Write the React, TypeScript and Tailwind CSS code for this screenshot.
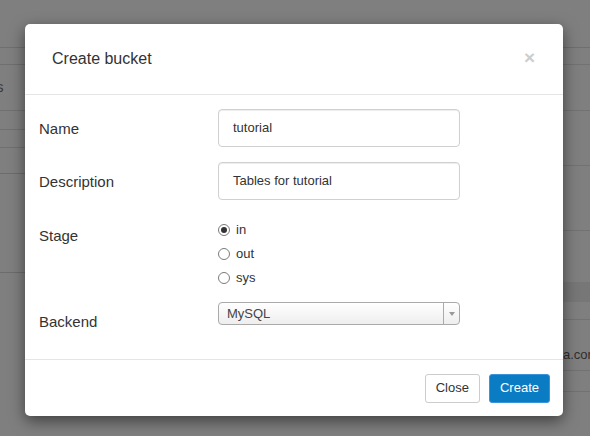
import React from 'react';

const font = { fontFamily: '"Liberation Sans", Arial, Helvetica, sans-serif' };

const Radio = ({ label, checked }: { label: string; checked?: boolean }) => (
  <div className="flex items-center h-[24px]">
    <span className="w-[12px] h-[12px] rounded-full border border-[#7b7b7b] bg-white flex items-center justify-center">
      {checked && <span className="w-[6px] h-[6px] rounded-full bg-[#333]" />}
    </span>
    <span className="ml-[6px] text-[13px] text-[#333]">{label}</span>
  </div>
);

const TextInput = ({ value }: { value: string }) => (
  <div className="w-[242px] h-[38px] border border-[#d0d0d0] rounded-[4px] bg-white shadow-[inset_0_1px_1px_rgba(0,0,0,0.075)] flex items-center px-[14px] text-[13px] text-[#333]">
    {value}
  </div>
);

export default function App() {
  return (
    <div className="relative w-[590px] h-[436px] overflow-hidden bg-[#7f7f7f]" style={font}>
      {/* Page behind the dimmed backdrop */}
      <div className="flex h-full">
        <div className="w-[25px] flex flex-col">
          <div className="h-[48px] border-b border-[#6f6f6f]" />
          <div className="h-[17px] border-b border-[#6f6f6f]" />
          <div className="h-[46px] border-b border-[#707070] flex items-center text-[15px] text-[#3a3a3a] -ml-[4px]">s</div>
          <div className="h-[19px] border-b border-[#707070]" />
          <div className="h-[18px] border-b border-[#707070]" />
          <div className="h-[26px] border-b border-[#6c6c6c]" />
          <div className="h-[99px] border-b border-[#6c6c6c]" />
        </div>
        <div className="flex-1" />
        <div className="w-[27px] flex flex-col">
          <div className="h-[48px] border-b border-[#6f6f6f]" />
          <div className="h-[17px] border-b border-[#727272]" />
          <div className="h-[46px] border-b border-[#727272]" />
          <div className="h-[55px] border-b border-[#727272]" />
          <div className="h-[65px] border-b border-[#727272]" />
          <div className="h-[51px]" />
          <div className="h-[20px] bg-[#777]" />
          <div className="h-[18px] border-b border-[#727272]" />
          <div className="h-[51px] border-b border-[#727272] flex items-end pb-[6px] text-[13px] text-[#2e2e2e] whitespace-nowrap overflow-hidden">a.com</div>
          <div className="h-[21px] border-b border-[#727272]" />
        </div>
      </div>

      {/* Modal */}
      <div className="absolute left-[25px] top-[24px] w-[538px] h-[392px] bg-white rounded-[5px] shadow-[0_5px_15px_rgba(0,0,0,0.5)] flex flex-col text-[#333]">
        <div className="h-[71px] border-b border-[#e5e5e5] flex items-center justify-between pl-[27px] pr-[28px]">
          <span className="text-[16px] text-[#333]">Create bucket</span>
          <span className="text-[19px] font-bold text-[#cdcdcd] leading-none -mt-[4px]">×</span>
        </div>

        <div className="flex-1 pl-[14px] pt-[14px] flex flex-col">
          <div className="flex items-center">
            <label className="w-[179px] text-[15px] mt-[3px]">Name</label>
            <TextInput value="tutorial" />
          </div>
          <div className="flex items-center mt-[15px]">
            <label className="w-[179px] text-[15px] mt-[3px]">Description</label>
            <TextInput value="Tables for tutorial" />
          </div>
          <div className="flex mt-[18px]">
            <label className="w-[179px] text-[15px] pt-[8px] leading-[20px]">Stage</label>
            <div className="flex flex-col">
              <Radio label="in" checked />
              <Radio label="out" />
              <Radio label="sys" />
            </div>
          </div>
          <div className="flex mt-[12px]">
            <label className="w-[179px] text-[15px] pt-[10px] leading-[20px]">Backend</label>
            <div className="w-[242px] h-[23px] border border-[#aaa] rounded-[4px] bg-gradient-to-b from-white to-[#eeeeee] flex items-center">
              <span className="flex-1 pl-[8px] text-[13px] text-[#444]">MySQL</span>
              <span className="w-[16px] h-full border-l border-[#aaa] flex items-center justify-center">
                <span className="w-0 h-0 border-l-[3px] border-r-[3px] border-t-[4px] border-l-transparent border-r-transparent border-t-[#999]" />
              </span>
            </div>
          </div>
        </div>

        <div className="h-[57px] border-t border-[#e5e5e5] flex items-center justify-end gap-[9px] pr-[13px]">
          <button className="h-[29px] px-[10px] border border-[#ccc] rounded-[3px] bg-white text-[13px] text-[#333]">Close</button>
          <button className="h-[29px] px-[10px] border border-[#3a94d8] rounded-[3px] bg-[#0a7cc4] text-[13px] text-white">Create</button>
        </div>
      </div>
    </div>
  );
}
